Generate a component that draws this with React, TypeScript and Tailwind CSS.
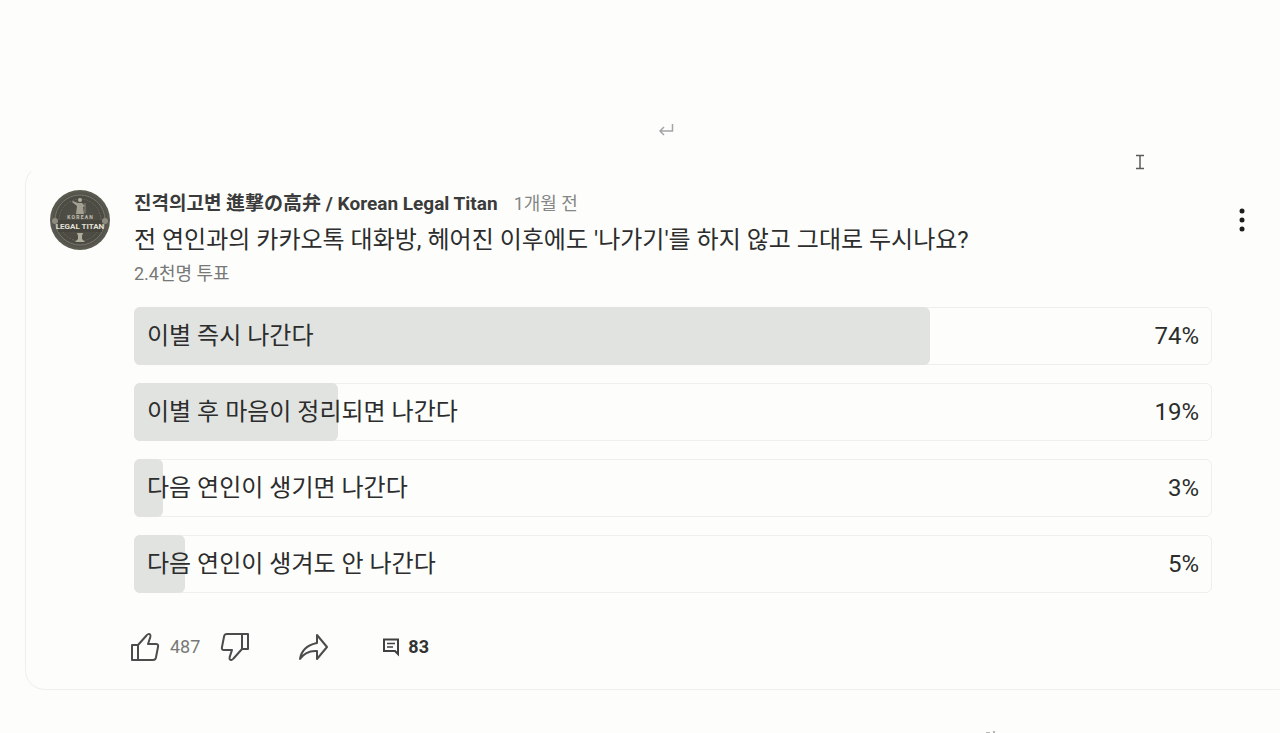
interface PollOption {
  label: string;
  percent: number;
  fill: number;
}

const OPTIONS: PollOption[] = [
  { label: "이별 즉시 나간다", percent: 74, fill: 74 },
  { label: "이별 후 마음이 정리되면 나간다", percent: 19, fill: 19 },
  { label: "다음 연인이 생기면 나간다", percent: 3, fill: 2.7 },
  { label: "다음 연인이 생겨도 안 나간다", percent: 5, fill: 4.7 },
];

function Avatar() {
  return (
    <svg viewBox="0 0 60 60" className="h-[60px] w-[60px] shrink-0" role="img" aria-label="Korean Legal Titan">
      <defs>
        <radialGradient id="disc" cx="50%" cy="50%" r="50%">
          <stop offset="0" stopColor="#55544b" />
          <stop offset="0.75" stopColor="#4b4a42" />
          <stop offset="1" stopColor="#5e5d54" />
        </radialGradient>
      </defs>
      <circle cx="30" cy="30" r="30" fill="url(#disc)" />
      <circle cx="30" cy="30" r="25" fill="none" stroke="#77756a" strokeWidth="1" />
      <circle cx="30" cy="30" r="21" fill="none" stroke="#69675d" strokeWidth="1" strokeDasharray="2 1" />
      {/* statue */}
      <circle cx="30" cy="10" r="2" fill="#b3b0a2" />
      <path d="M23 11l5 2h4l3 3-2 1 1 7h-8l1-8-5-4z" fill="#a3a092" />
      <path d="M35 13v10" stroke="#8c897c" />
      <circle cx="5" cy="31" r="3" fill="#8e8b7e" />
      <circle cx="55" cy="31" r="3" fill="#8e8b7e" />
      <rect x="8" y="30" width="44" height="12" fill="#45443d" />
      <text x="30" y="29" textAnchor="middle" fontFamily="Roboto, sans-serif" fontSize="5" fontWeight="700" fill="#c4c1b5">
        K O R E A N
      </text>
      <text x="30" y="39" textAnchor="middle" fontFamily="Roboto, sans-serif" fontSize="8" fontWeight="700" fill="#e3e1d8">
        LEGAL TITAN
      </text>
      {/* pedestal */}
      <path d="M27 43h6l-1 3v3l3 3H25l3-3v-3z" fill="#b0ad9f" />
    </svg>
  );
}

function ThumbIcon({ className = "" }: { className?: string }) {
  return (
    <svg viewBox="0 0 30 30" fill="none" stroke="#4b4c4b" strokeWidth="2" strokeLinejoin="round" className={`h-[30px] w-[30px] ${className}`}>
      <path d="M2 13h6v15H2z" />
      <path d="M8 13l8.500-9.500c1-1.400 2.700-1.900 3.500-1.100.6.6.6 1.500.3 2.700L18 12h8c1.700 0 2.400 1.100 2.100 2.500l-2.200 11.300c-.4 1.600-1.300 2.200-2.700 2.200H8" />
    </svg>
  );
}

function ShareIcon() {
  return (
    <svg viewBox="0 0 32 30" fill="none" stroke="#4b4c4b" strokeWidth="2" strokeLinejoin="round" className="h-[30px] w-8">
      <path d="M19 3l10 12-10 12v-8C12 18.500 6 21 2 27c1.500-9 7-14 17-16z" />
    </svg>
  );
}

function CommentIcon() {
  return (
    <svg viewBox="0 0 18 20" fill="none" stroke="#3f403f" strokeWidth="2" className="h-5 w-[18px]">
      <path d="M2 2.500h14v14.500l-3-3H2z" />
      <path d="M5 6.500h8M5 10h6" strokeWidth="1.500" />
    </svg>
  );
}

function OptionRow({ option }: { option: PollOption }) {
  return (
    <button type="button" className="relative flex h-[58px] w-full items-center justify-between rounded-md border border-[#eff0ee] px-3 text-left text-2xl text-[#2c2d2c]">
      <span className="absolute -inset-y-px -left-px rounded-md bg-[#e1e3e1]" style={{ width: `${option.fill}%` }} />
      <span className="relative">{option.label}</span>
      <span className="relative">{option.percent}%</span>
    </button>
  );
}

export default function App() {
  return (
    <div className="relative flex h-screen flex-col overflow-hidden bg-[#fdfefc] font-['Roboto','Noto_Sans_CJK_KR',sans-serif]">
      <div className="flex h-[165px] shrink-0 justify-center pt-[122px] pl-[52px]">
        <svg viewBox="0 0 16 16" fill="none" stroke="#a3a4a3" strokeWidth="1.500" className="h-4 w-4">
          <path d="M14.500 2v7H2M6 5L2 9l4 4" />
        </svg>
      </div>

      <article className="ml-[25px] flex shrink-0 items-start rounded-l-[20px] border border-t-transparent border-r-transparent border-b-[#eff0ee] border-l-[#eff0ee] pt-6 pr-[19px] pb-[27px] pl-6">
        <Avatar />

        <div className="ml-6 min-w-0 flex-1">
          <header className="flex h-7 items-center gap-4 text-[19px] whitespace-nowrap">
            <h2 className="font-bold text-[#3a3b3a]">진격의고변 進撃の高弁 / Korean Legal Titan</h2>
            <span className="text-lg text-[#858685]">1개월 전</span>
          </header>
          <p className="text-2xl leading-[44px] text-[#2c2d2c]">
            전 연인과의 카카오톡 대화방, 헤어진 이후에도 '나가기'를 하지 않고 그대로 두시나요?
          </p>
          <p className="text-lg leading-6 text-[#777877]">2.4천명 투표</p>

          <div className="mt-[21px] flex flex-col gap-[18px]">
            {OPTIONS.map((option) => (
              <OptionRow key={option.label} option={option} />
            ))}
          </div>

          <footer className="-ml-1 mt-[39px] flex h-[30px] items-center text-lg">
            <button type="button" aria-label="좋아요" className="flex items-center gap-2.5 text-[#777877]">
              <ThumbIcon />
              487
            </button>
            <button type="button" aria-label="싫어요" className="ml-5">
              <ThumbIcon className="rotate-180" />
            </button>
            <button type="button" aria-label="공유" className="ml-12">
              <ShareIcon />
            </button>
            <button type="button" aria-label="댓글" className="ml-[52px] flex items-center gap-2 font-bold text-[#323332]">
              <CommentIcon />
              83
            </button>
          </footer>
        </div>

        <button type="button" aria-label="더보기" className="mt-[18px] ml-3 flex w-9 justify-center">
          <svg viewBox="0 0 6 24" fill="#1c1d1c" className="h-6 w-[6px]">
            <circle cx="3" cy="3" r="2.500" />
            <circle cx="3" cy="12" r="2.500" />
            <circle cx="3" cy="21" r="2.500" />
          </svg>
        </button>
      </article>

      {/* next line of the document, cut off by the window edge */}
      <div className="flex shrink-0 justify-end pt-10 pr-[280px]">
        <svg viewBox="0 0 16 16" fill="none" stroke="#b5b6b5" strokeWidth="2" className="h-4 w-4">
          <path d="M2 3h4M10 1v13M10 8h4" />
        </svg>
      </div>

      {/* text cursor */}
      <svg viewBox="0 0 10 16" fill="none" stroke="#5b5c5b" strokeWidth="1.500" className="absolute top-[154px] right-[135px] h-4 w-2.5">
        <path d="M1 1.500h8M1 14.500h8M5 1.500v13" />
      </svg>
    </div>
  );
}
